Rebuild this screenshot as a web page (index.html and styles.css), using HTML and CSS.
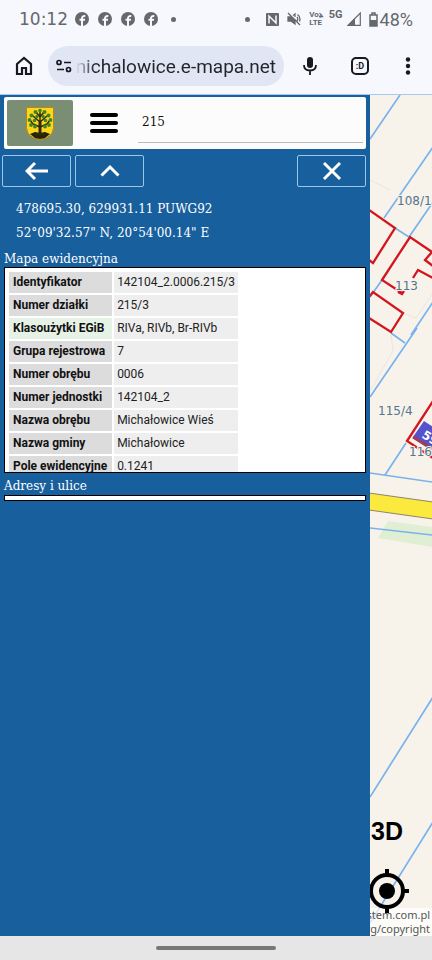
FILE: index.html
```html
<!DOCTYPE html>
<html lang="pl">
<head>
<meta charset="utf-8">
<meta name="viewport" content="width=device-width, initial-scale=1">
<title>Michałowice e-mapa</title>
<link rel="stylesheet" href="styles.css">
</head>
<body>
<svg class="defs" aria-hidden="true">
  <symbol id="fb" viewBox="0 0 14 14"><circle cx="7" cy="7" r="7" fill="currentColor"/><path d="M7 14V6.5Q7 3.6 10.3 4M4.5 7.7H10" fill="none" stroke="#f7f8fe" stroke-width="2"/></symbol>
</svg>
<header class="status">
  <div class="status-group">
    <span class="clock">10:12</span>
    <svg class="fb"><use href="#fb"/></svg>
    <svg class="fb"><use href="#fb"/></svg>
    <svg class="fb"><use href="#fb"/></svg>
    <svg class="fb"><use href="#fb"/></svg>
    <span class="dot"></span>
  </div>
  <div class="status-group right">
    <span class="dot"></span>
    <svg width="13" height="13" viewBox="0 0 13 13"><rect width="13" height="13" rx="1" fill="currentColor"/><path d="M3 10.500V3l7 7V2.500" fill="none" stroke="#f7f8fe" stroke-width="1.500"/></svg>
    <svg width="14" height="14" viewBox="0 0 14 14" fill="none" stroke="currentColor" stroke-width="1.300"><path d="M8 5V2L6 3.500M10 5q1.500 2 0 4M10.500 2.500q3.500 2.500 2 7M1 1l12 12"/><path d="M1 5h3l4 3v4L4 9H1z" fill="currentColor"/></svg>
    <span class="lte"><span>Vo&#x0299B;</span><span>LTE</span></span>
    <span class="five">5G</span>
    <svg width="14" height="14" viewBox="0 0 14 14"><path d="M1 13.300L13.300 1v12.300z" fill="none" stroke="currentColor" stroke-width="1.200"/><path d="M1 13.300L8 6v7.300z" fill="currentColor"/></svg>
    <span class="battery"><svg width="9" height="15" viewBox="0 0 9 15"><path d="M1 3h7v11H1zM3 1h3v2H3z" fill="none" stroke="currentColor" stroke-width="1.500"/><path d="M1 8h7v6H1z" fill="currentColor"/></svg>48%</span>
  </div>
</header>
<nav class="browser">
  <button aria-label="Strona główna"><svg width="18" height="20" viewBox="0 0 18 20"><path d="M2 8l7-6 7 6v10h-5v-6H7v6H2z" fill="none" stroke="currentColor" stroke-width="2.200"/></svg></button>
  <div class="address">
    <svg width="16" height="14" viewBox="0 0 16 14" fill="none" stroke="currentColor" stroke-width="1.700"><circle cx="3" cy="3.500" r="2"/><path d="M8 3.500h7M1 10.500h7"/><circle cx="12.500" cy="10.500" r="2"/></svg>
    <span class="url">nichalowice.e-mapa.net</span>
  </div>
  <button class="mic" aria-label="Wyszukiwanie głosowe"><svg width="16" height="20" viewBox="0 0 16 20"><rect x="5" y="1" width="6" height="11" rx="3" fill="currentColor"/><path d="M2 9q0 5.500 6 5.500T14 9M8 14.500V19" fill="none" stroke="currentColor" stroke-width="1.800"/></svg></button>
  <button class="tabs" aria-label="Karty">:D</button>
  <button class="more" aria-label="Więcej"><svg width="6" height="18" viewBox="0 0 6 18" fill="currentColor"><circle cx="3" cy="2.500" r="2.200"/><circle cx="3" cy="9" r="2.200"/><circle cx="3" cy="15.500" r="2.200"/></svg></button>
</nav>
<main class="page">
  <section class="panel">
    <div class="search">
      <a class="crest" href="#" aria-label="Gmina Michałowice">
        <svg width="28" height="33" viewBox="0 0 28 33">
          <path d="M.5.500h27v20Q27 31 14 32.500 1 31 .5 20.500z" fill="#fbd61a" stroke="#b58a12"/>
          <path d="M4 27l5-2 5 1 5-1 5 2-5 4-5 1-5-1z" fill="#26230b"/>
          <path d="M14 28V4M14 20l-7-3M14 20l7-3M14 15L7 9M14 15l7-6M14 10l-4-5M14 10l4-5M7 17l-3-4M21 17l3-4M14 26l-5 2M14 26l5 2" fill="none" stroke="#332b10" stroke-width="1.500"/>
          <path d="M14 28V14" stroke="#332b10" stroke-width="3"/>
          <g fill="#42842a"><circle cx="14" cy="3.500" r="1.800"/><circle cx="9.500" cy="5" r="2"/><circle cx="18.500" cy="5" r="2"/><circle cx="5.500" cy="8.500" r="2"/><circle cx="22.500" cy="8.500" r="2"/><circle cx="11" cy="9.500" r="1.700"/><circle cx="17" cy="9.500" r="1.700"/><circle cx="3.500" cy="13" r="1.900"/><circle cx="24.500" cy="13" r="1.900"/><circle cx="8.500" cy="13.500" r="1.800"/><circle cx="19.500" cy="13.500" r="1.800"/><circle cx="5" cy="18" r="1.900"/><circle cx="23" cy="18" r="1.900"/><circle cx="9" cy="19.500" r="1.900"/><circle cx="19" cy="19.500" r="1.900"/></g>
        </svg>
      </a>
      <button class="menu" aria-label="Menu"><i></i><i></i><i></i></button>
      <input type="text" value="215" aria-label="Szukaj">
    </div>
    <div class="actions">
      <button aria-label="Wstecz"><svg width="24" height="20" viewBox="0 0 24 20"><path d="M10 2L2 10l8 8M2 10h21"/></svg></button>
      <button aria-label="Zwiń"><svg width="20" height="14" viewBox="0 0 20 14"><path d="M1.500 11.500L10 3l8.500 8.500"/></svg></button>
      <button class="close" aria-label="Zamknij"><svg width="20" height="20" viewBox="0 0 20 20"><path d="M2 2l16 16M18 2L2 18"/></svg></button>
    </div>
    <div class="coords"><p>478695.30, 629931.11 PUWG92</p><p>52°09'32.57" N, 20°54'00.14" E</p></div>
    <h2>Mapa ewidencyjna</h2>
    <div class="box">
      <table>
        <tr><th>Identyfikator</th><td>142104_2.0006.215/3</td></tr>
        <tr><th>Numer działki</th><td>215/3</td></tr>
        <tr><th class="green">Klasoużytki EGiB</th><td>RIVa, RIVb, Br-RIVb</td></tr>
        <tr><th>Grupa rejestrowa</th><td>7</td></tr>
        <tr><th>Numer obrębu</th><td>0006</td></tr>
        <tr><th>Numer jednostki</th><td>142104_2</td></tr>
        <tr><th>Nazwa obrębu</th><td>Michałowice Wieś</td></tr>
        <tr><th>Nazwa gminy</th><td>Michałowice</td></tr>
        <tr><th>Pole ewidencyjne</th><td>0.1241</td></tr>
      </table>
    </div>
    <h2>Adresy i ulice</h2>
    <div class="box empty"></div>
  </section>
  <section class="map">
    <svg class="plan" viewBox="370 95 62 841" preserveAspectRatio="xMinYMin slice">
      <path d="M378 538L388 521 432 527V547z" fill="#e0efd3"/>
      <path d="M370 180L390 190M391 333l2 18-23 40M406 314l10 4 16-24" fill="none" stroke="#ebe5df"/>
      <path d="M369 493L433 502V519L369 510z" fill="#fbea3d" stroke="#8d846b"/>
      <g fill="none" stroke="#7ab2ee" stroke-width="1.700">
        <path d="M370 139L400 95M384 218L433 147M395 228l14 9L433 202M370 297L382 280M411 335L433 302M370 397L417 328M391 333l14 10M406 443L385 475M370 473L432 482M370 528L432 535M370 797L433 697M370 923L433 822"/>
      </g>
      <g fill="none" stroke="#d3151f" stroke-width="2.300">
        <path d="M369 210L395 228 373 263 369 260M402 293l-20-13 28-43 22 15-7 8 8 6M433 278l-15-8-5 8M398 292l4 2 2-3M369 297l4-5 30 21-12 19-22-14M433 401L407 441 433 458"/>
      </g>
      <path d="M424 421L442 433 432 449 413 437z" fill="#5652cb"/>
      <path d="M413 437l19 12" stroke="#a03d50" stroke-width="3"/>
      <text class="house" transform="translate(421 437) rotate(32)">59</text>
      <g class="plots"><text x="397" y="205">108/1.</text><text x="395" y="290">113</text><text x="378" y="415">115/4</text><text x="409" y="456">116</text></g>
    </svg>
    <div class="tools">
      <button class="three">3D</button>
      <button class="locate" aria-label="Moja lokalizacja"><svg width="46" height="46" viewBox="0 0 46 46"><circle cx="23" cy="23" r="16" fill="none" stroke="#000" stroke-width="4"/><circle cx="23" cy="23" r="8"/><path d="M23 1v6M23 39v6M1 23h6M39 23h6" stroke="#000" stroke-width="4"/></svg></button>
      <div class="credit"><a href="#">stem.com.pl</a><a href="#">rg/copyright</a></div>
    </div>
  </section>
</main>
<footer class="gesture"><span></span></footer>
</body>
</html>
```
FILE: styles.css
```css
* { box-sizing: border-box; }
body {
  margin: 0;
  min-height: 100vh;
  display: flex;
  flex-direction: column;
  font-family: Roboto, sans-serif;
  background: #f7f8fe;
}
button {
  border: 0;
  padding: 0;
  background: none;
  color: inherit;
  font: inherit;
  display: flex;
  align-items: center;
  justify-content: center;
}
svg { display: block; flex: none; }
.defs { position: absolute; width: 0; height: 0; }

.status {
  height: 38px;
  padding: 0 19px;
  display: flex;
  align-items: center;
  justify-content: space-between;
  color: #66686c;
}
.status-group { display: flex; align-items: center; gap: 9px; }
.clock { font: 17px "DejaVu Sans", sans-serif; margin-right: -2px; }
.fb { width: 14px; height: 14px; }
.dot { width: 5px; height: 5px; border-radius: 50%; background: currentColor; }
.fb + .dot { margin-left: 4px; }
.right { gap: 8px; }
.right .dot { margin-right: 8px; }
.lte { display: grid; font: bold 8px/8px Roboto, sans-serif; }
.five { align-self: flex-start; font: bold 11px/12px Roboto, sans-serif; }
.right .five { margin: 0 -4px 0 -2px; }
.battery { display: flex; align-items: center; gap: 2px; font-size: 18px; }

.browser {
  height: 57px;
  padding: 0 21px 0 15px;
  display: flex;
  align-items: center;
  border-bottom: 1px solid #a9caee;
  color: #17191e;
}
.address {
  flex: 1;
  height: 40px;
  margin: 0 18px 0 15px;
  padding: 0 8px;
  display: flex;
  align-items: center;
  justify-content: space-between;
  border-radius: 20px;
  background: #e1e6f4;
}
.url {
  font: 19px Roboto, sans-serif;
  background: linear-gradient(90deg, #e1e6f4, #22252c 18px);
  background-clip: text;
  color: transparent;
  white-space: nowrap;
}
.tabs {
  width: 18px;
  height: 18px;
  margin: 0 36px 0 33px;
  border: 2px solid;
  border-radius: 5px;
  font-size: 9px;
  font-weight: bold;
}

.page { flex: 1; display: flex; }
.panel { flex: 1; background: #185f9d; color: #fff; }
.search {
  height: 52px;
  margin: 2px 4px 4px;
  padding: 3px;
  display: flex;
  align-items: center;
  background: #fcfcfc;
  border-radius: 2px;
}
.crest {
  width: 66px;
  height: 46px;
  display: grid;
  place-items: center;
  border-radius: 2px;
  background: #7a8e74;
}
.menu { flex-direction: column; gap: 4px; margin: 0 20px 0 17px; }
.menu i { width: 28px; height: 4px; border-radius: 2px; background: #000; }
.search input {
  flex: 1;
  min-width: 0;
  height: 40px;
  padding: 0 4px 2px;
  border: 0;
  border-bottom: 1px solid #bbb;
  background: none;
  font: 12px "Roboto Slab", "DejaVu Serif", serif;
  color: #111;
}
.actions { display: flex; gap: 4px; padding: 2px 4px 0 2px; }
.actions button {
  width: 69px;
  height: 32px;
  border: 1px solid #9ac6ea;
  border-radius: 2px;
}
.actions svg { fill: none; stroke: #fff; stroke-width: 3; }
.actions .close { margin-left: auto; }
.coords {
  padding: 10px 16px 5px;
  font: 12px/24px "Roboto Slab", "DejaVu Serif", serif;
}
.coords p { margin: 0; }
h2 {
  margin: 0 4px;
  font: 12px/18px "Roboto Slab", "DejaVu Serif", serif;
}
.box {
  height: 206px;
  margin: -1px 4px 4px;
  padding: 2px;
  overflow: hidden;
  border: 1px solid #000;
  background: #fff;
  color: #222;
}
.box.empty { height: 6px; margin: 0 4px; padding: 0; }
table { border-collapse: separate; border-spacing: 2px; font-size: 12px; line-height: 17px; }
th, td { padding: 2px 3px; text-align: left; white-space: nowrap; }
th { padding: 2px 5px 2px 4px; background: #dcdcdc; color: #111; }
td { background: #eee; }
th.green { background: #e7f2e6; }

.map { position: relative; width: 62px; overflow: hidden; background: #f7f3eb; }
.plan { position: absolute; inset: 0; width: 100%; height: 100%; }
.plots { font: 12px "DejaVu Sans", sans-serif; fill: #56748e; stroke: #f7f3eb; stroke-width: 2px; paint-order: stroke; }
.house { font: bold 12px "DejaVu Sans", sans-serif; fill: #fff; }
.tools { position: absolute; inset: auto 0 0; }
.three { font: bold 25px/30px "Liberation Sans", sans-serif; margin-left: 1px; }
.locate { margin: 22px 0 0 -6px; }
.credit {
  display: flex;
  flex-direction: column;
  align-items: flex-end;
  margin-top: -6px;
  padding-right: 2px;
  background: #ffffffb3;
  font: 11px/14px "Noto Sans", sans-serif;
}
.credit a { color: #555; text-decoration: none; white-space: nowrap; }
.gesture { height: 24px; display: grid; place-items: center; background: #e6e6e6; }
.gesture span { width: 120px; height: 4px; border-radius: 2px; background: #777; }
```
